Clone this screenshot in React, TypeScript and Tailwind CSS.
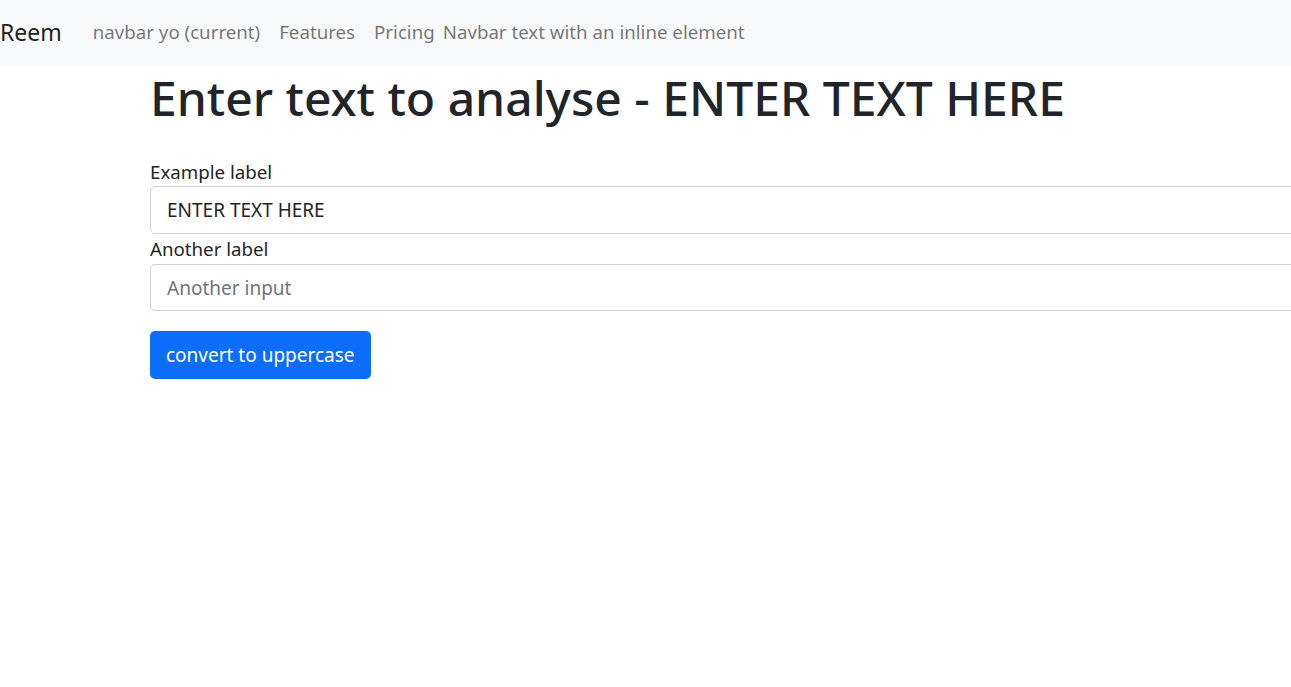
import React from "react";

export default function App() {
  const font = { fontFamily: '"Noto Sans", "Open Sans", sans-serif' };
  return (
    <div className="w-full min-h-[687px] overflow-hidden bg-white" style={font}>
      <nav className="h-[66px] bg-[#f8f9fa] flex items-center pb-[2px]">
        <span className="text-[23px] text-[#000000e6] leading-none pr-[31px]">Reem</span>
        <div className="flex items-center gap-[19px] text-[18.7px] text-[#0000008c] leading-none">
          <span>navbar yo (current)</span>
          <span>Features</span>
          <span>Pricing</span>
        </div>
        <span className="ml-[8px] text-[18.7px] text-[#0000008c] leading-none">Navbar text with an inline element</span>
      </nav>
      <div className="pl-[150px]">
        <h1 className="text-[48px] font-medium text-[#212529] leading-[1.2] mt-[3px]">Enter text to analyse - ENTER TEXT HERE</h1>
        <div className="mt-[35px] flex flex-col">
          <label className="text-[18.7px] text-[#212529] leading-[24px] pb-[2px] -mt-[2px]">Example label</label>
          <div className="w-[1200px] h-[48px] border border-[#ced4da] rounded-[5px] flex items-center pl-[16px] pt-[2px] text-[19px] text-[#212529]">ENTER TEXT HERE</div>
          <label className="text-[18.7px] text-[#212529] leading-[30px]">Another label</label>
          <div className="w-[1200px] h-[47px] border border-[#ced4da] rounded-[5px] flex items-center pl-[16px] pt-[2px] text-[19px] text-[#6c757d]">Another input</div>
        </div>
        <button className="mt-[20px] h-[48px] px-[16px] pt-[2px] rounded-[5px] bg-[#0d6efd] text-white text-[19px]">convert to uppercase</button>
      </div>
    </div>
  );
}
